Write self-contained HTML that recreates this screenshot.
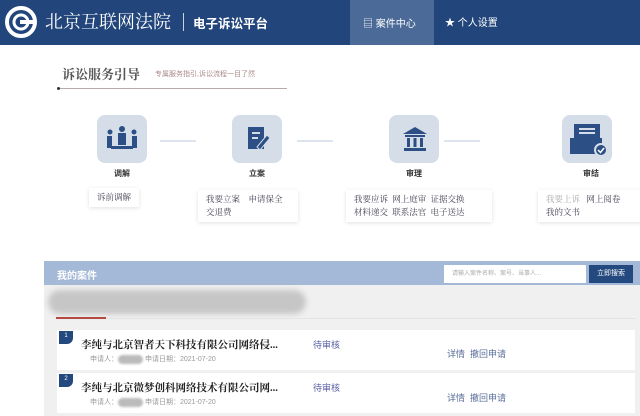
<html><head><style>
body{margin:0;width:640px;height:416px;overflow:hidden;background:#fff;font-family:"Liberation Sans","Noto Sans CJK SC",sans-serif;position:relative}
.a{position:absolute}
.hd{left:0;top:0;width:640px;height:45px;background:#22467c}
.ic{width:50px;height:48px;background:#d5dde8;border-radius:8px}
.lbl{font-size:8px;color:#333;font-weight:bold;text-align:center;width:60px}
.box{background:#fff;box-shadow:0 1px 4px rgba(0,0,0,.12);font-size:8.5px;color:#445;font-family:"Liberation Serif","Noto Serif CJK SC",serif;line-height:13px;padding:3px 8px}
.arrow{height:2px;background:#dde4ee}
.row{left:57px;width:578px;height:40px;background:#fff}
.t{font-family:"Liberation Serif","Noto Serif CJK SC",serif;font-weight:bold;font-size:10.5px;color:#222}
.s{font-size:7px;color:#999}
</style></head><body>
<div class="a hd"></div>
<div class="a" style="left:350px;top:0;width:84px;height:45px;background:#4b6a97"></div>
<svg class="a" style="left:4px;top:4px" width="34" height="36" viewBox="0 0 34 36"><circle cx="17" cy="18" r="14" fill="none" stroke="#fff" stroke-width="4"/><circle cx="17" cy="18" r="7" fill="none" stroke="#fff" stroke-width="3"/><rect x="16" y="16" width="16" height="4" fill="#fff"/></svg>
<div class="a" style="left:45px;top:8px;color:#fff;font-size:18px;font-family:'Liberation Serif','Noto Serif CJK SC',serif;white-space:nowrap">北京互联网法院</div>
<div class="a" style="left:183px;top:13px;width:1px;height:18px;background:#c9d3e2"></div>
<div class="a" style="left:193px;top:13px;color:#fff;font-size:12.5px;font-weight:bold;white-space:nowrap">电子诉讼平台</div>
<div class="a" style="left:363px;top:15px;color:#fff;font-size:10px">▤ 案件中心</div>
<div class="a" style="left:445px;top:14px;color:#fff;font-size:10px">★ 个人设置</div>
<div class="a" style="left:62px;top:64px;font-size:13px;color:#555;font-weight:bold;font-family:'Liberation Serif','Noto Serif CJK SC',serif;white-space:nowrap">诉讼服务引导</div>
<div class="a" style="left:155px;top:69px;font-size:7px;color:#a88;white-space:nowrap">专属服务指引,诉讼流程一目了然</div>
<div class="a" style="left:59px;top:88px;width:228px;height:1px;background:#b9a9a9"></div>
<div class="a" style="left:57px;top:87px;width:3px;height:3px;border-radius:2px;background:#333"></div>

<div class="a ic" style="left:97px;top:115px"></div>
<div class="a ic" style="left:232px;top:115px"></div>
<div class="a ic" style="left:389px;top:115px"></div>
<div class="a ic" style="left:562px;top:115px"></div>
<svg class="a" style="left:105px;top:125px" width="34" height="30"><g fill="#2c4f85"><circle cx="17" cy="4" r="3"/><rect x="13" y="8" width="8" height="12"/><circle cx="5" cy="7" r="2.5"/><circle cx="29" cy="7" r="2.5"/><rect x="2" y="11" width="5" height="12"/><rect x="27" y="11" width="5" height="12"/><rect x="6" y="21" width="22" height="3"/></g></svg>
<svg class="a" style="left:245px;top:125px" width="26" height="28"><rect x="3" y="2" width="16" height="22" fill="#2c4f85"/><g stroke="#d5dde8" stroke-width="2"><line x1="7" y1="8" x2="15" y2="8"/><line x1="7" y1="13" x2="13" y2="13"/></g><path d="M12 22 L22 10 L25 13 L15 25 Z" fill="#2c4f85" stroke="#d5dde8"/></svg>
<svg class="a" style="left:402px;top:125px" width="26" height="28"><g fill="#2c4f85"><path d="M13 2 L25 9 L1 9 Z"/><rect x="3" y="10" width="20" height="2"/><rect x="5" y="13" width="3" height="9"/><rect x="11.5" y="13" width="3" height="9"/><rect x="18" y="13" width="3" height="9"/><rect x="2" y="23" width="22" height="3"/></g></svg>
<svg class="a" style="left:570px;top:122px" width="40" height="36"><rect x="4" y="2" width="26" height="14" fill="#2c4f85"/><g stroke="#d5dde8" stroke-width="2"><line x1="9" y1="7" x2="25" y2="7"/><line x1="9" y1="11" x2="25" y2="11"/></g><rect x="0" y="16" width="32" height="16" fill="#2c4f85"/><circle cx="31" cy="28" r="6" fill="#2c4f85" stroke="#d5dde8" stroke-width="2"/><path d="M28 28 L30.5 30.5 L34 26" stroke="#fff" stroke-width="1.5" fill="none"/></svg>
<div class="a arrow" style="left:160px;top:140px;width:36px"></div>
<div class="a arrow" style="left:297px;top:140px;width:36px"></div>
<div class="a arrow" style="left:444px;top:140px;width:36px"></div>
<div class="a lbl" style="left:92px;top:168px">调解</div>
<div class="a lbl" style="left:227px;top:168px">立案</div>
<div class="a lbl" style="left:384px;top:168px">审理</div>
<div class="a lbl" style="left:561px;top:168px">审结</div>
<div class="a box" style="left:89px;top:188px">诉前调解</div>
<div class="a box" style="left:198px;top:190px;width:84px">我要立案&nbsp;&nbsp;&nbsp;&nbsp;申请保全<br>交退费</div>
<div class="a box" style="left:346px;top:190px;width:130px">我要应诉&nbsp;&nbsp;网上庭审&nbsp;&nbsp;证据交换<br>材料递交&nbsp;&nbsp;联系法官&nbsp;&nbsp;电子送达</div>
<div class="a box" style="left:538px;top:190px;width:100px"><span style="color:#aaa">我要上诉</span>&nbsp;&nbsp;&nbsp;网上阅卷<br>我的文书</div>

<div class="a" style="left:44px;top:285px;width:596px;height:131px;background:#f0f0f0"></div>
<div class="a" style="left:44px;top:261px;width:596px;height:24px;background:#a4b9d7"></div>
<div class="a" style="left:57px;top:267px;color:#fff;font-size:10px;font-weight:bold">我的案件</div>
<div class="a" style="left:444px;top:265px;width:142px;height:18px;background:#fff;font-size:6px;color:#aaa;line-height:18px;padding-left:8px;box-sizing:border-box">请输入案件名称、案号、当事人...</div>
<div class="a" style="left:589px;top:265px;width:44px;height:18px;background:#24497f;color:#fff;font-size:7px;line-height:18px;text-align:center">立即搜索</div>
<div class="a" style="left:48px;top:290px;width:258px;height:24px;border-radius:12px;background:#c6c6c6;filter:blur(3px)"></div>
<div class="a" style="left:56px;top:317px;width:50px;height:2px;background:#b54a44"></div>
<div class="a" style="left:106px;top:318px;width:530px;height:1px;background:#e4e4e4"></div>
<div class="a row" style="top:330px"></div>
<div class="a row" style="top:373px"></div>
<div class="a" style="left:59px;top:331px;width:14px;height:13px;background:#24497f;border-radius:0 0 6px 0;color:#fff;font-size:6px;text-align:center;line-height:11px">1</div>
<div class="a" style="left:59px;top:374px;width:14px;height:13px;background:#24497f;border-radius:0 0 6px 0;color:#fff;font-size:6px;text-align:center;line-height:11px">2</div>
<div class="a t" style="left:81px;top:337px">李纯与北京智者天下科技有限公司网络侵...</div>
<div class="a t" style="left:81px;top:380px">李纯与北京微梦创科网络技术有限公司网...</div>
<div class="a s" style="left:90px;top:354px">申请人：<span style="display:inline-block;width:25px;height:9px;background:#bbb;border-radius:5px;vertical-align:middle;filter:blur(1px)"></span> 申请日期：2021-07-20</div>
<div class="a s" style="left:90px;top:397px">申请人：<span style="display:inline-block;width:25px;height:9px;background:#bbb;border-radius:5px;vertical-align:middle;filter:blur(1px)"></span> 申请日期：2021-07-20</div>
<div class="a" style="left:313px;top:338px;font-size:9px;color:#5a5fa6">待审核</div>
<div class="a" style="left:313px;top:381px;font-size:9px;color:#5a5fa6">待审核</div>
<div class="a" style="left:447px;top:347px;font-size:9px;color:#5a6e9a">详情&nbsp;&nbsp;撤回申请</div>
<div class="a" style="left:447px;top:391px;font-size:9px;color:#5a6e9a">详情&nbsp;&nbsp;撤回申请</div>
</body></html>
